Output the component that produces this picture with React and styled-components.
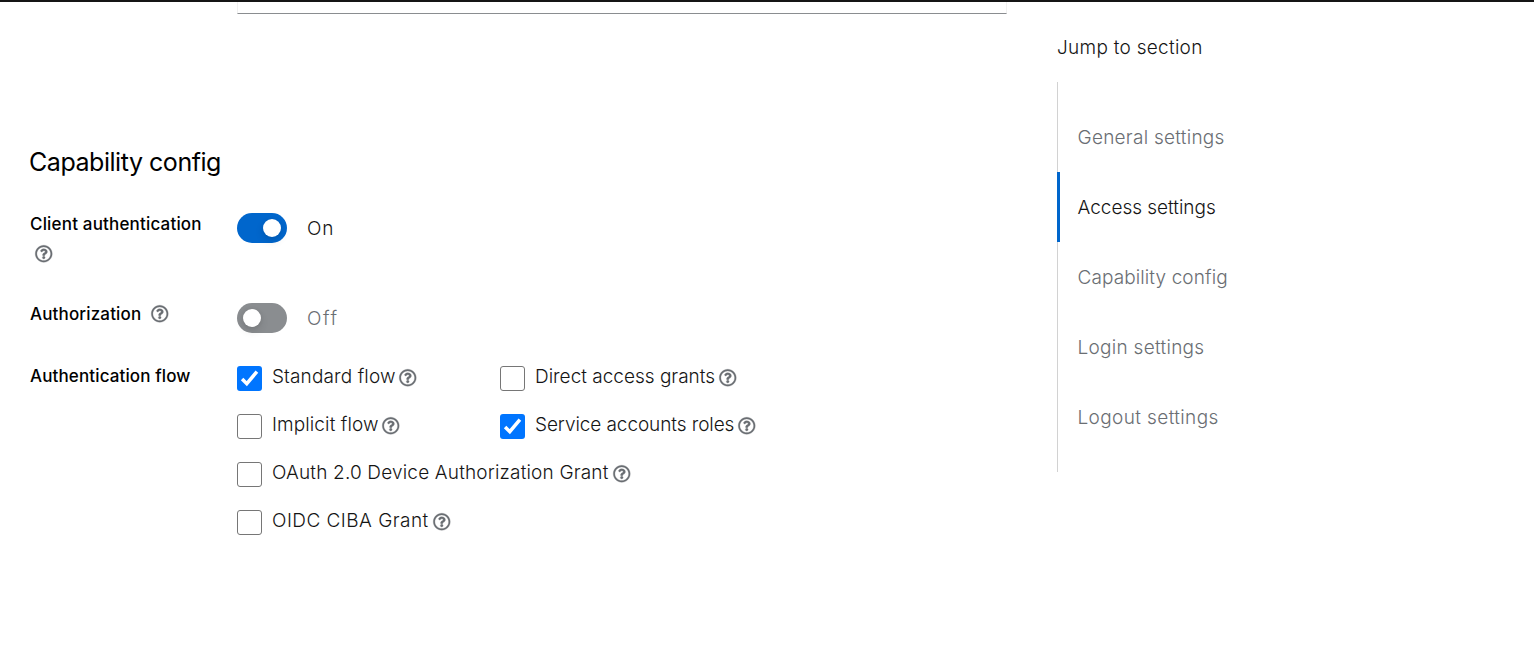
import React from "react";
import styled, { createGlobalStyle } from "styled-components";
import { FaRegQuestionCircle } from "react-icons/fa";

const GlobalStyle = createGlobalStyle`
  * { box-sizing: border-box; }
  body {
    margin: 0;
    background: #fff;
    color: #151515;
    font-family: Inter, "Open Sans", sans-serif;
    font-size: 19px;
    font-weight: 280;
    line-height: 30px;
    overflow: hidden;
  }
`;

const Page = styled.div`
  height: 658px;
  border-top: 2px solid #151515;
  display: flex;
  align-items: flex-start;
`;

const Content = styled.main`
  width: 1007px;
  padding-left: 30px;
`;

const FieldEnd = styled.div`
  height: 12px;
  margin-left: 207px;
  border: 1px solid #f0f0f0;
  border-top: 0;
  border-bottom-color: #8a8d90;
`;

const Heading = styled.h1`
  margin: 129px 0 0 -1px;
  height: 39px;
  line-height: 39px;
  font-size: 25px;
  font-weight: 400;
  color: #000;
  white-space: nowrap;
`;

const Text = styled.span`
  display: inline-block;
  white-space: nowrap;
  letter-spacing: ${(p) => p.$track || 0}px;
  width: ${(p) => (p.$width ? `${p.$width}px` : "auto")};
  padding-top: ${(p) => p.$drop || 0}px;
`;

const FormRow = styled.div`
  display: grid;
  grid-template-columns: 207px 1fr;
  margin-top: ${(p) => p.$gap}px;
  height: ${(p) => p.$height}px;
`;

const FormLabel = styled.div`
  display: flex;
  flex-wrap: wrap;
  align-content: flex-start;
  align-items: center;
  width: 180px;
  font-size: 17px;
  font-weight: 500;
  color: #000;
`;

const HelpIcon = styled(FaRegQuestionCircle)`
  flex: none;
  width: 17.5px;
  height: 17.5px;
  color: #6a6e73;
  stroke: #6a6e73;
  stroke-width: 8;
  overflow: visible;
`;

const Help = styled.span`
  display: flex;
  align-items: center;
  height: 30px;
  padding-left: ${(p) => p.$left || 0}px;
  padding-top: ${(p) => p.$drop || 0}px;
`;

const SwitchLine = styled.div`
  display: flex;
  align-items: center;
  height: 30px;
  margin-top: 4px;
  gap: 20px;
  color: ${(p) => (p.$on ? "#151515" : "#6a6e73")};
`;

const Track = styled.span`
  display: flex;
  align-items: center;
  justify-content: ${(p) => (p.$on ? "flex-end" : "flex-start")};
  width: 50px;
  height: 30px;
  padding: 0 6px;
  border-radius: 15px;
  background: ${(p) => (p.$on ? "#0066cc" : "#8a8d90")};
`;

const Knob = styled.span`
  width: 18px;
  height: 18px;
  border-radius: 50%;
  background: #fff;
  box-shadow: 0 4px 8px rgba(3, 3, 3, 0.12), 0 0 4px rgba(3, 3, 3, 0.06);
`;

const Options = styled.div`
  display: grid;
  grid-template-columns: 263px 1fr;
  grid-auto-rows: 48px;
`;

const Option = styled.label`
  display: flex;
  align-items: flex-start;
  grid-column: ${(p) => (p.$wide ? "1 / -1" : "auto")};
`;

const Box = styled.span`
  display: flex;
  flex: none;
  width: 25px;
  height: 25px;
  margin: 5px 10px 0 0;
  border-radius: 3px;
  border: ${(p) => (p.$checked ? "0" : "1.5px solid #767676")};
  background: ${(p) => (p.$checked ? "#0075ff" : "#fff")};
`;

const Jump = styled.aside`
  margin: 31px 0 0 50px;
`;

const JumpList = styled.ul`
  list-style: none;
  margin: 19px 0 0;
  padding: 20px 0;
  height: 390px;
  box-shadow: inset 1px 0 #d2d2d2;
`;

const JumpItem = styled.li`
  height: 70px;
  padding: 21px 0 0 ${(p) => (p.$current ? 17.5 : 20.5)}px;
  border-left: ${(p) => (p.$current ? "3px solid #0066cc" : "0")};
  color: ${(p) => (p.$current ? "#151515" : "#6a6e73")};
`;

const options = [
  { text: "Standard flow", width: 127, track: 0.12, checked: true },
  { text: "Direct access grants", width: 184 },
  { text: "Implicit flow", width: 110, track: 0.1 },
  { text: "Service accounts roles", width: 203, track: -0.08, checked: true },
  { text: "OAuth 2.0 Device Authorization Grant", width: 341, track: 0.17, wide: true },
  { text: "OIDC CIBA Grant", width: 161, track: 0.46, wide: true },
];

const sections = [
  { text: "General settings", track: 0.26 },
  { text: "Access settings", track: -0.02, current: true },
  { text: "Capability config", track: 0.1 },
  { text: "Login settings", track: 0.28 },
  { text: "Logout settings", track: 0.38 },
];

function Checkbox({ checked }) {
  return (
    <Box $checked={checked}>
      {checked && (
        <svg width="25" height="25" viewBox="0 0 25 25">
          <path d="M5.1 13 9.8 17.7 19.9 5.6" fill="none" stroke="#fff" strokeWidth="3.5" />
        </svg>
      )}
    </Box>
  );
}

function Switch({ on, text, track }) {
  return (
    <SwitchLine $on={on}>
      <Track $on={on}>
        <Knob />
      </Track>
      <Text $track={track} $drop={2}>
        {text}
      </Text>
    </SwitchLine>
  );
}

export default function App() {
  return (
    <>
      <GlobalStyle />
      <Page>
        <Content>
          <FieldEnd />
          <Heading>
            <Text $track={-0.46}>Capability config</Text>
          </Heading>
          <FormRow $gap={27} $height={90}>
            <FormLabel>
              <Text $width={180} $track={0.18}>
                Client authentication
              </Text>
              <Help $left={5}>
                <HelpIcon />
              </Help>
            </FormLabel>
            <Switch on text="On" track={0.9} />
          </FormRow>
          <FormRow $gap={0} $height={62}>
            <FormLabel>
              <Text $width={121} $track={0.15}>
                Authorization
              </Text>
              <Help>
                <HelpIcon />
              </Help>
            </FormLabel>
            <Switch text="Off" track={1.6} />
          </FormRow>
          <FormRow $gap={0} $height={192}>
            <FormLabel>
              <Text $track={0.13}>Authentication flow</Text>
            </FormLabel>
            <Options>
              {options.map((o) => (
                <Option key={o.text} $wide={o.wide}>
                  <Checkbox checked={o.checked} />
                  <Text $width={o.width} $track={o.track} $drop={1}>
                    {o.text}
                  </Text>
                  <Help $drop={4}>
                    <HelpIcon />
                  </Help>
                </Option>
              ))}
            </Options>
          </FormRow>
        </Content>
        <Jump>
          <Text $track={0.28}>Jump to section</Text>
          <JumpList>
            {sections.map((s) => (
              <JumpItem key={s.text} $current={s.current}>
                <Text $track={s.track}>{s.text}</Text>
              </JumpItem>
            ))}
          </JumpList>
        </Jump>
      </Page>
    </>
  );
}
